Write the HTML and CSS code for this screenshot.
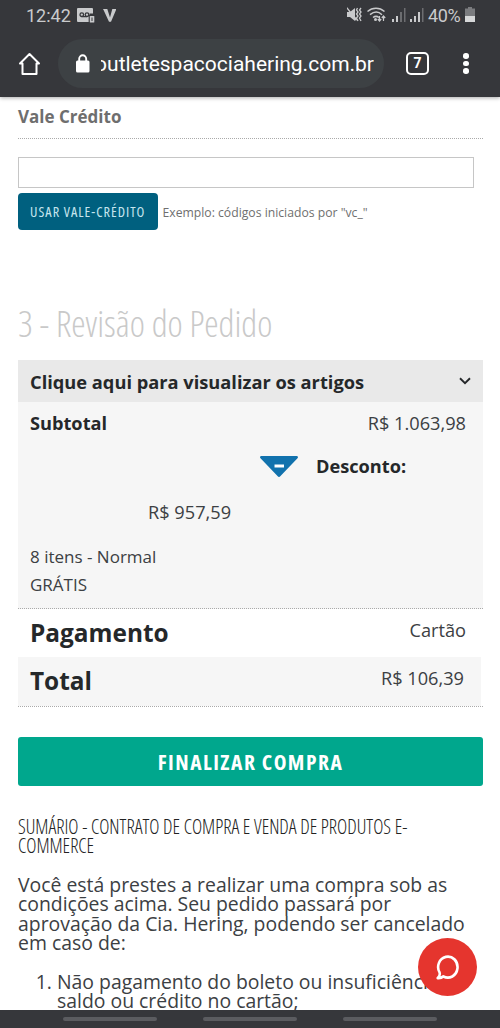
FILE: index.html
```html
<!DOCTYPE html>
<html lang="pt-BR">
<head>
<meta charset="utf-8">
<title>Revisão do Pedido</title>
<link rel="stylesheet" href="styles.css">
</head>
<body>
<div class="screen">
  <header class="chrome">
    <div class="status">
      <span class="clock">12:42</span>
      <svg class="voicemail" width="18" height="15" viewBox="0 0 18 15"><path fill="#c9cacc" d="M1 0h14a1 1 0 0 1 1 1v4.500h-3.500V14H1a1 1 0 0 1-1-1V1a1 1 0 0 1 1-1z"/><g fill="none" stroke="#36373b" stroke-width="1.300"><circle cx="4.800" cy="6.700" r="1.800"/><circle cx="10" cy="6.700" r="1.800"/><path d="M4.800 8.600H10M12.300 14V7.700h5"/></g><rect x="12.800" y="8" width="4.500" height="6.500" rx=".6" fill="#c9cacc"/><path d="M15 9.500v3.500" stroke="#36373b"/></svg>
      <svg class="vmark" width="13" height="13" viewBox="0 0 13 13"><path fill="#c9cacc" d="M0 0h4.300L7 8.500 9.300 0H13v1L8 12.800H6L.8 1.500z"/></svg>
      <span class="grow"></span>
      <svg class="signals" width="78" height="16" viewBox="0 0 78 16"><g fill="#c9cacc"><path d="M0 5h3l5-4v13l-5-4H0z"/><path d="M0 0l10 12-1 2L0 2z"/></g><g fill="none" stroke="#c9cacc" stroke-width="1.300"><path d="M10.500 1l-1 2 1.500 2-1.500 2 1.500 2-1.500 2 1.500 3M14 1l-1.500 2L14 5l-1.500 2L14 9l-1.500 2 1.500 3"/><path d="M20.500 4.500c5-4.300 12-4.300 17 0M23 7.700c4-3.300 8.500-3.300 12 0M26 10.500c2-1.500 4-1.500 6 0" stroke-width="1.500"/><path d="M32.500 9v4.500M30.800 12l1.700 2 1.700-2M36.500 14V9M34.800 11l1.700-2 1.700 2" stroke-width="1.200"/></g><circle cx="28.500" cy="12.500" r="1.500" fill="#c9cacc"/><g fill="#c9cacc"><path d="M45 12h2v3h-2zM49 9h2v6h-2zM63 12h2v3h-2zM67 9h2v6h-2zM71 5h2v10h-2z"/><path fill="#6c6d70" d="M53 5h2v10h-2zM57 1h1.500v14H57zM75 1h1.500v14H75z"/></g></svg>
      <span class="percent">40%</span>
      <svg class="battery" width="10" height="16" viewBox="0 0 10 16"><path fill="#7b7c7f" d="M3 0h4v1.500h3V10H0V1.500h3z"/><path fill="#d7d8d9" d="M0 9h10v6H0z"/></svg>
    </div>
    <div class="toolbar">
      <svg class="home" width="24" height="24" viewBox="0 0 24 24" fill="none" stroke="#fff" stroke-width="2" stroke-linejoin="round"><path d="M5.500 11.500V22h14V11.500h2.500L12.500 2 3 11.500z"/></svg>
      <div class="address">
        <svg width="14" height="19" viewBox="0 0 14 19"><rect y="6.500" width="13.500" height="12" rx="1.500" fill="#fff"/><path d="M3.200 7.500V4.800a3.500 3.500 0 0 1 7 0v2.700" fill="none" stroke="#fff" stroke-width="1.900"/></svg>
        <div class="clip"><span class="url">outletespacociahering.com.br</span></div>
      </div>
      <div class="tabs">7</div>
      <div class="more"><i></i><i></i><i></i></div>
    </div>
  </header>

  <main class="page">
    <h3 class="voucher-title">Vale Crédito</h3>
    <input class="voucher-input" type="text" aria-label="Vale Crédito">
    <div class="voucher-actions">
      <button class="voucher-button"><span>USAR VALE-CRÉDITO</span></button>
      <small>Exemplo: códigos iniciados por "vc_"</small>
    </div>

    <h2 class="review-title"><span>3 - Revisão do Pedido</span></h2>
    <div class="items-toggle">
      <span>Clique aqui para visualizar os artigos</span>
      <svg width="12" height="8" viewBox="0 0 12 8"><path d="M1 1.300l5 4.800 5-4.800" fill="none" stroke="#25282a" stroke-width="1.900"/></svg>
    </div>
    <section class="summary">
      <div class="subtotal"><b>Subtotal</b><span>R$ 1.063,98</span></div>
      <div class="discount">
        <svg width="40" height="23" viewBox="0 0 40 23"><path d="M2.500 1h35c1.500 0 2 1.300 1 2.300L21.500 21c-1 1.300-2 1.300-3 0L1.500 3.300C.5 2.300 1 1 2.500 1z" fill="#1172ad"/><path d="M15.500 11h9.500" stroke="#fff" stroke-width="3"/></svg>
        <b>Desconto:</b>
      </div>
      <div class="discount-value">R$ 957,59</div>
      <div class="shipping">8 itens - Normal<br>GRÁTIS</div>
    </section>
    <div class="payment"><b>Pagamento</b><span>Cartão</span></div>
    <div class="total-wrap"><div class="total"><b>Total</b><span>R$ 106,39</span></div></div>
    <button class="checkout"><span>FINALIZAR COMPRA</span></button>

    <h4 class="terms-title">SUMÁRIO - CONTRATO DE COMPRA E VENDA DE PRODUTOS E-<br>COMMERCE</h4>
    <p class="terms">Você está prestes a realizar uma compra sob as<br>condições acima. Seu pedido passará por<br>aprovação da Cia. Hering, podendo ser cancelado<br>em caso de:</p>
    <ol class="terms-list"><li>Não pagamento do boleto ou insuficiência de<br>saldo ou crédito no cartão;</li></ol>
  </main>

  <div class="chat"><svg width="24" height="26" viewBox="0 0 26 26" preserveAspectRatio="none"><path d="M3.900 18.600A10.500 10.500 0 1 1 8 22.400C6 24 4 24.200 1.800 24c2-1.500 2.800-3 2.100-5.400z" fill="none" stroke="#fff" stroke-width="2.800" stroke-linejoin="round"/></svg></div>
  <footer class="gestures"><i></i><i></i><i></i></footer>
</div>
</body>
</html>
```
FILE: styles.css
```css
* { box-sizing: border-box; }
body { margin: 0; background: #fff; color: #3c4043; font-family: "Open Sans", sans-serif; }
h2, h3, h4, p, ol { margin: 0; font-weight: 400; }
button { border: 0; padding: 0; }
.screen { position: relative; width: 500px; height: 1028px; overflow: hidden; display: flex; flex-direction: column; }
.chrome { flex: none; height: 97px; background: #36373b; font-family: Roboto, sans-serif; box-shadow: 0 1px 4px #0005; }
.status { height: 30px; padding: 0 25px 0 26px; display: flex; align-items: center; color: #c9cacc; font-size: 18px; }
.clock { width: 51px; }
.vmark { margin-left: 8px; }
.grow { flex: 1; }
.percent { margin-left: 3px; width: 34px; font-size: 18px; letter-spacing: -.4px; }
.battery { margin-left: 3px; }
.toolbar { height: 67px; display: flex; align-items: center; padding: 0 30px 0 17px; }
.address { margin-left: 17px; width: 326px; height: 49px; border-radius: 25px; background: #3d4144; display: flex; align-items: center; padding-left: 18px; color: #fff; }
.clip { margin-left: 11px; width: 273px; overflow: hidden; display: flex; justify-content: flex-end; }
.url { font-size: 21px; line-height: 28px; white-space: nowrap; }
.tabs { margin-left: 22px; width: 23px; height: 23px; border: 2px solid #fff; border-radius: 5px; color: #fff; font-weight: 700; font-size: 14px; line-height: 19px; text-align: center; }
.more { margin-left: 34px; display: flex; flex-direction: column; gap: 2px; }
.more i { width: 5.500px; height: 5.500px; border-radius: 50%; background: #fff; }
.page { flex: 1; min-height: 0; overflow: hidden; padding: 0 17px 0 18px; }
.voucher-title { height: 42px; border-bottom: 1px dotted #aaa; font-weight: 700; font-size: 17px; line-height: 40px; color: #6e6e6e; }
.voucher-input { display: block; margin-top: 18px; width: 456px; height: 31px; border: 1px solid #c6c6c6; background: #fff; }
.voucher-actions { margin-top: 5px; display: flex; align-items: center; gap: 5px; height: 37px; }
.voucher-button { width: 139.500px; height: 37px; border-radius: 4px; background: #00607f; color: #c6e5ee; font: 400 14.300px/37px "Open Sans", sans-serif; font-stretch: 75%; letter-spacing: 1px; white-space: nowrap; }
.voucher-actions small { font-size: 12.200px; line-height: 20px; color: #6f6f6f; white-space: nowrap; padding-top: 2px; }
.review-title { margin-top: 68px; height: 62px; font-size: 36.200px; font-weight: 300; font-stretch: 75%; line-height: 50px; color: #c9c9c9; white-space: nowrap; }
.items-toggle { height: 42px; background: #e9e9e9; padding: 0 12px; display: flex; align-items: center; justify-content: space-between; font-size: 18.250px; font-weight: 700; color: #25282a; }
.summary { height: 207px; background: #f6f6f6; border-bottom: 1px dotted #aaa; padding: 0 17px 0 12px; font-size: 18.200px; }
b { color: #25282a; }
.subtotal { display: flex; justify-content: space-between; line-height: 42px; }
.discount { display: flex; align-items: center; height: 43px; padding-left: 229px; gap: 17px; }
.discount svg { margin-top: 2px; }
.discount-value { padding-left: 118px; line-height: 50px; }
.shipping { margin-top: 6px; font-size: 17px; line-height: 27.500px; }
.payment, .total { display: flex; justify-content: space-between; padding: 0 17px 0 12px; font-size: 18.200px; }
.payment { height: 48px; line-height: 42px; }
.payment b, .total b { font-size: 24.400px; line-height: 48px; }
.total-wrap { height: 50px; border-bottom: 1px dotted #aaa; }
.total { width: 463px; height: 49px; background: #f6f6f6; line-height: 43px; }
.checkout { display: block; margin-top: 30px; width: 465px; height: 49px; border-radius: 3px; background: #00a78d; color: #fff; font: 700 21.500px/50px "Open Sans", sans-serif; font-stretch: 75%; letter-spacing: 1.500px; white-space: nowrap; }
.terms-title { margin-top: 31px; font-size: 19.350px; font-weight: 300; font-stretch: 75%; line-height: 19.400px; color: #222; white-space: nowrap; }
.terms { margin-top: 19px; font-size: 19.400px; line-height: 19.500px; white-space: nowrap; }
.terms-list { margin-top: 19px; padding-left: 39px; font-size: 19.400px; line-height: 19.500px; white-space: nowrap; }
.chat { position: absolute; left: 418px; top: 938px; width: 59px; height: 58px; border-radius: 50%; background: #e5352e; display: flex; align-items: center; justify-content: center; }
.gestures { flex: none; height: 18px; background: #36373b; display: flex; gap: 46px; padding: 7px 0 0 63px; }
.gestures i { width: 94px; height: 4px; border-radius: 2px; background: #5b5c60; }
```
